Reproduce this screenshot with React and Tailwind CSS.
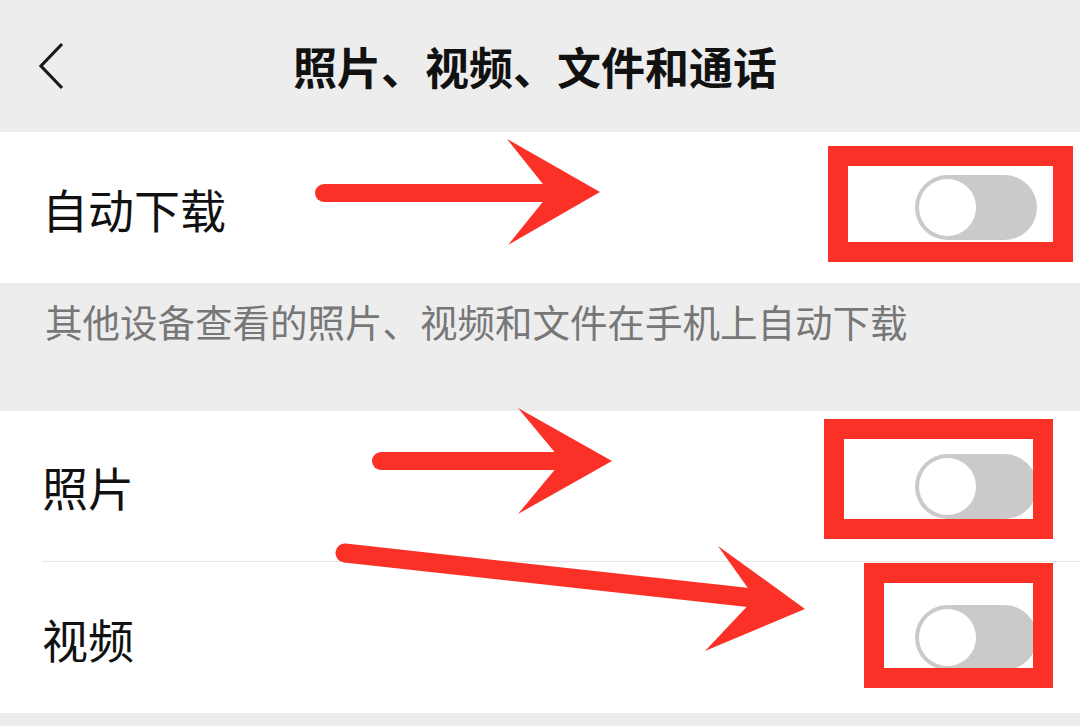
import React from 'react';

const cjk = { fontFamily: '"Noto Sans CJK SC", "Noto Sans", sans-serif' };

function Toggle() {
  return (
    <div className="w-[122px] h-[65px] rounded-full bg-[#cacaca] p-[4px] flex items-center">
      <div className="w-[57px] h-[57px] rounded-full bg-white" />
    </div>
  );
}

function Row({ label, divider }) {
  return (
    <div className="bg-white pl-[42px]">
      <div className={`h-[151px] flex items-center justify-between pr-[43px] ${divider ? 'border-b border-[#e6e6e6]' : ''}`}>
        <span className="text-[46px] text-[#111] leading-none">{label}</span>
        <Toggle />
      </div>
    </div>
  );
}

// red annotation overlay (arrows + boxes) drawn on top of the screenshot
function Annotations() {
  const red = '#fb3128';
  return (
    <>
      <div className="absolute left-[828px] top-[146px] w-[245px] h-[116px] border-[20px] border-[#fb3128]" />
      <div className="absolute left-[824px] top-[419px] w-[229px] h-[120px] border-[20px] border-[#fb3128]" />
      <div className="absolute left-[864px] top-[563px] w-[189px] h-[125px] border-[20px] border-[#fb3128]" />
      <svg className="absolute inset-0 pointer-events-none" width="1080" height="726">
        <line x1="324" y1="193" x2="556" y2="193" stroke={red} strokeWidth="18" strokeLinecap="round" />
        <polygon points="600,192 507,139 550,193 508,245" fill={red} />
        <line x1="381" y1="461" x2="566" y2="461" stroke={red} strokeWidth="18" strokeLinecap="round" />
        <polygon points="612,461 518,408 562,461 518,514" fill={red} />
        <line x1="345" y1="553" x2="762" y2="599" stroke={red} strokeWidth="19" strokeLinecap="round" />
        <polygon points="805,609 718,546 755,598 705,651" fill={red} />
      </svg>
    </>
  );
}

export default function App() {
  return (
    <div className="relative w-[1080px] h-[726px] overflow-hidden bg-[#ededed]" style={cjk}>
      <header className="h-[132px] grid grid-cols-[1fr_auto_1fr] items-center pr-[10px]">
        <div className="pl-[36px] flex items-center">
          <svg width="32" height="48" viewBox="0 0 32 48">
            <polyline points="26,2 5,24 26,46" fill="none" stroke="#1a1a1a" strokeWidth="3.2" />
          </svg>
        </div>
        <h1 className="text-[44px] font-bold text-[#111] leading-none">照片、视频、文件和通话</h1>
        <div />
      </header>

      <Row label="自动下载" />

      <div className="h-[128px] pl-[45px] pt-[16px]">
        <p className="text-[37.5px] text-[#777] leading-[44px] whitespace-nowrap">其他设备查看的照片、视频和文件在手机上自动下载</p>
      </div>

      <Row label="照片" divider />
      <Row label="视频" />
      <div className="h-[13px]" />

      <Annotations />
    </div>
  );
}
